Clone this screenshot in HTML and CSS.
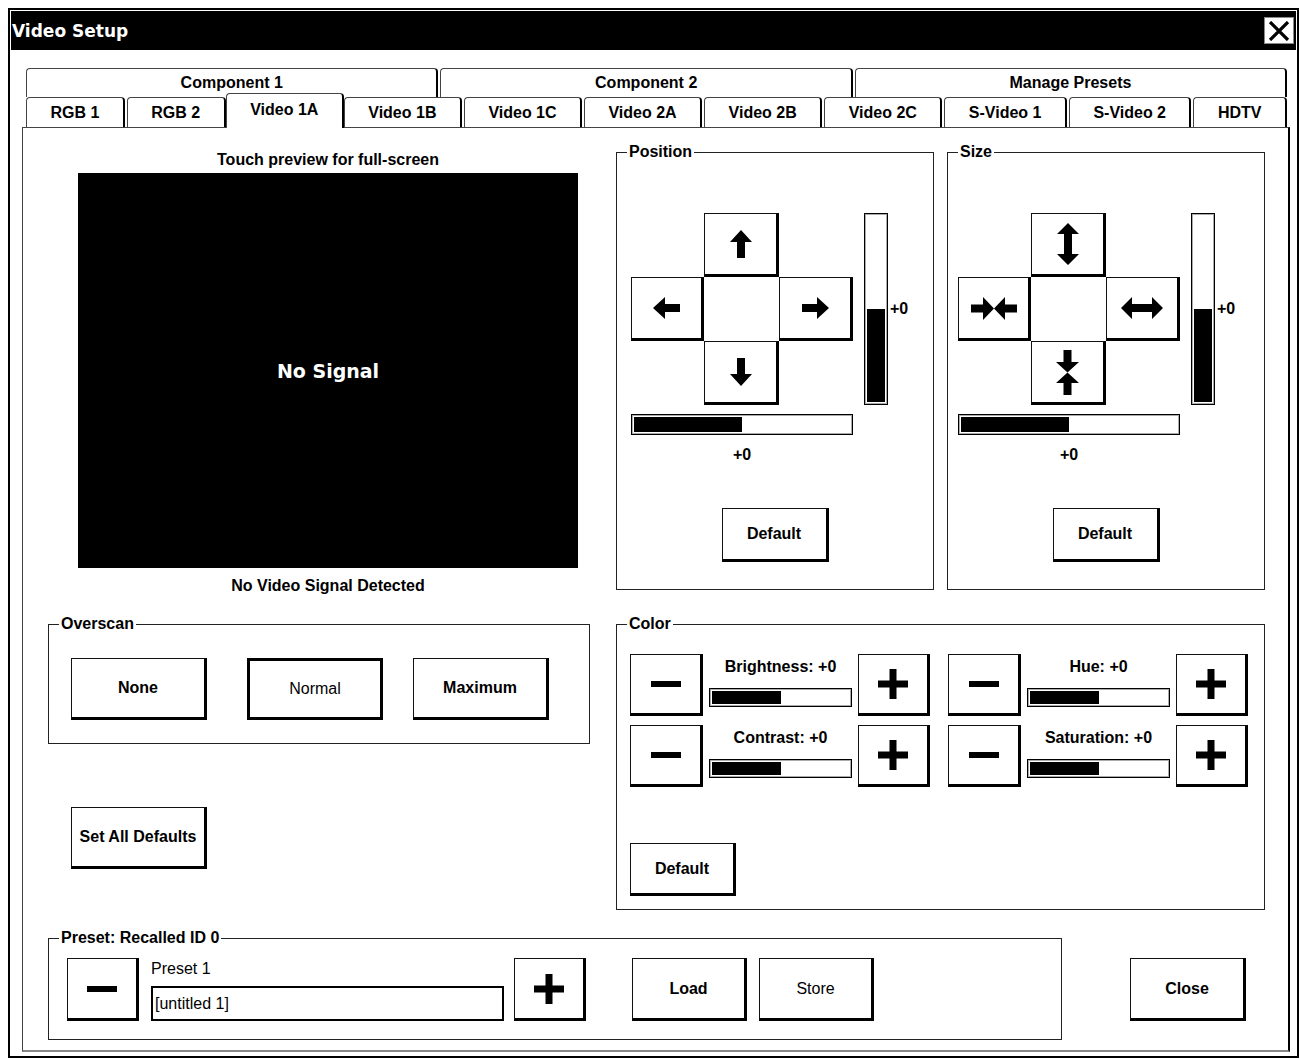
FILE: index.html
```html
<!DOCTYPE html>
<html lang="en">

<head>
    <meta charset="UTF-8">
    <meta
        name="viewport"
        content="width=device-width, initial-scale=1.0"
    >
    <link rel="stylesheet" href="styles.css">
    <title>Video Setup</title>
</head>

<body>
    <div class="window">
        <div class="titlebar">
            <span class="title">Video Setup</span>
            <button class="close-x" type="button">
                <svg width="22" height="20" viewBox="0 0 22 20">
                    <path d="M2 1 L20 19 M20 1 L2 19" stroke="#000" stroke-width="3.2" fill="none" />
                </svg>
            </button>
        </div>

        <div class="content">
            <div class="tabs tabs-top">
                <div class="tab">Component 1</div>
                <div class="tab">Component 2</div>
                <div class="tab">Manage Presets</div>
            </div>
            <div class="tabs tabs-bottom">
                <div class="tab">RGB 1</div>
                <div class="tab">RGB 2</div>
                <div class="tab selected">Video 1A</div>
                <div class="tab">Video 1B</div>
                <div class="tab">Video 1C</div>
                <div class="tab">Video 2A</div>
                <div class="tab">Video 2B</div>
                <div class="tab">Video 2C</div>
                <div class="tab">S-Video 1</div>
                <div class="tab">S-Video 2</div>
                <div class="tab">HDTV</div>
            </div>

            <div class="panel">
                <!-- preview + position / size -->
                <div class="row">
                    <div class="preview-col">
                        <div class="caption">Touch preview for full-screen</div>
                        <div class="preview">No Signal</div>
                        <div class="caption caption-under">No Video Signal Detected</div>
                    </div>

                    <div class="adjust-pair">
                        <fieldset class="group adjust">
                            <legend>Position</legend>
                            <div class="adjust-body">
                                <div class="dpad">
                                    <button class="btn pad-up" type="button">
                                        <svg width="22" height="28" viewBox="0 0 22 28"><polygon points="11,0 22,12 15,12 15,28 7,28 7,12 0,12" /></svg>
                                    </button>
                                    <button class="btn pad-left" type="button">
                                        <svg width="27" height="22" viewBox="0 0 27 22"><polygon points="0,11 12,0 12,7 27,7 27,15 12,15 12,22" /></svg>
                                    </button>
                                    <button class="btn pad-right" type="button">
                                        <svg width="27" height="22" viewBox="0 0 27 22"><polygon points="27,11 15,0 15,7 0,7 0,15 15,15 15,22" /></svg>
                                    </button>
                                    <button class="btn pad-down" type="button">
                                        <svg width="22" height="28" viewBox="0 0 22 28"><polygon points="11,28 22,16 15,16 15,0 7,0 7,16 0,16" /></svg>
                                    </button>
                                </div>
                                <div class="vmeter">
                                    <div class="vbar"><div class="fill" style="height: 50%"></div></div>
                                    <span class="val">+0</span>
                                </div>
                                <div class="hmeter">
                                    <div class="hbar"><div class="fill" style="width: 50%"></div></div>
                                    <div class="val">+0</div>
                                </div>
                            </div>
                            <button class="btn btn-default" type="button">Default</button>
                        </fieldset>

                        <fieldset class="group adjust adjust-size">
                            <legend>Size</legend>
                            <div class="adjust-body">
                                <div class="dpad">
                                    <button class="btn pad-up" type="button">
                                        <svg width="22" height="42" viewBox="0 0 22 42"><polygon points="11,0 22,11 15,11 15,31 22,31 11,42 0,31 7,31 7,11 0,11" /></svg>
                                    </button>
                                    <button class="btn pad-left" type="button">
                                        <svg width="46" height="23" viewBox="0 0 46 23"><polygon points="0,7.5 12,7.5 12,0 23,11.5 12,23 12,15.5 0,15.5" /><polygon points="46,7.5 34,7.5 34,0 23,11.5 34,23 34,15.5 46,15.5" /></svg>
                                    </button>
                                    <button class="btn pad-right" type="button">
                                        <svg width="42" height="22" viewBox="0 0 42 22"><polygon points="0,11 11,0 11,7 31,7 31,0 42,11 31,22 31,15 11,15 11,22" /></svg>
                                    </button>
                                    <button class="btn pad-down" type="button">
                                        <svg width="23" height="45" viewBox="0 0 23 45"><polygon points="7.5,0 15.5,0 15.5,12 23,12 11.5,22.5 0,12 7.5,12" /><polygon points="7.5,45 15.5,45 15.5,33 23,33 11.5,22.5 0,33 7.5,33" /></svg>
                                    </button>
                                </div>
                                <div class="vmeter">
                                    <div class="vbar"><div class="fill" style="height: 50%"></div></div>
                                    <span class="val">+0</span>
                                </div>
                                <div class="hmeter">
                                    <div class="hbar"><div class="fill" style="width: 50%"></div></div>
                                    <div class="val">+0</div>
                                </div>
                            </div>
                            <button class="btn btn-default" type="button">Default</button>
                        </fieldset>
                    </div>
                </div>

                <!-- overscan + color -->
                <div class="row row-mid">
                    <div class="left-col">
                        <fieldset class="group overscan">
                            <legend>Overscan</legend>
                            <div class="overscan-row">
                                <button class="btn btn-wide" type="button">None</button>
                                <button class="btn btn-wide active" type="button">Normal</button>
                                <button class="btn btn-wide" type="button">Maximum</button>
                            </div>
                        </fieldset>
                        <button class="btn btn-wide btn-all" type="button">Set All Defaults</button>
                    </div>

                    <fieldset class="group color">
                        <legend>Color</legend>
                        <div class="color-grid">
                            <div class="color-ctl">
                                <button class="btn btn-pm" type="button"><svg width="30" height="6"><rect width="30" height="6" /></svg></button>
                                <div class="color-mid">
                                    <div class="color-label">Brightness: +0</div>
                                    <div class="hbar"><div class="fill" style="width: 50%"></div></div>
                                </div>
                                <button class="btn btn-pm" type="button"><svg width="30" height="30"><rect x="11.5" width="7" height="30" /><rect y="11.5" width="30" height="7" /></svg></button>
                            </div>
                            <div class="color-ctl">
                                <button class="btn btn-pm" type="button"><svg width="30" height="6"><rect width="30" height="6" /></svg></button>
                                <div class="color-mid">
                                    <div class="color-label">Hue: +0</div>
                                    <div class="hbar"><div class="fill" style="width: 50%"></div></div>
                                </div>
                                <button class="btn btn-pm" type="button"><svg width="30" height="30"><rect x="11.5" width="7" height="30" /><rect y="11.5" width="30" height="7" /></svg></button>
                            </div>
                            <div class="color-ctl">
                                <button class="btn btn-pm" type="button"><svg width="30" height="6"><rect width="30" height="6" /></svg></button>
                                <div class="color-mid">
                                    <div class="color-label">Contrast: +0</div>
                                    <div class="hbar"><div class="fill" style="width: 50%"></div></div>
                                </div>
                                <button class="btn btn-pm" type="button"><svg width="30" height="30"><rect x="11.5" width="7" height="30" /><rect y="11.5" width="30" height="7" /></svg></button>
                            </div>
                            <div class="color-ctl">
                                <button class="btn btn-pm" type="button"><svg width="30" height="6"><rect width="30" height="6" /></svg></button>
                                <div class="color-mid">
                                    <div class="color-label">Saturation: +0</div>
                                    <div class="hbar"><div class="fill" style="width: 50%"></div></div>
                                </div>
                                <button class="btn btn-pm" type="button"><svg width="30" height="30"><rect x="11.5" width="7" height="30" /><rect y="11.5" width="30" height="7" /></svg></button>
                            </div>
                        </div>
                        <button class="btn btn-color-default" type="button">Default</button>
                    </fieldset>
                </div>

                <!-- presets -->
                <div class="row row-bottom">
                    <fieldset class="group preset">
                        <legend>Preset: Recalled ID 0</legend>
                        <div class="preset-row">
                            <button class="btn btn-preset" type="button"><svg width="30" height="6"><rect width="30" height="6" /></svg></button>
                            <div class="preset-name">
                                <label for="presetName">Preset 1</label>
                                <input
                                    type="text"
                                    name="presetName"
                                    id="presetName"
                                    value="[untitled 1]"
                                >
                            </div>
                            <button class="btn btn-preset btn-plus" type="button"><svg width="30" height="30"><rect x="11.5" width="7" height="30" /><rect y="11.5" width="30" height="7" /></svg></button>
                            <button class="btn btn-action btn-load" type="button">Load</button>
                            <button class="btn btn-action btn-store" type="button">Store</button>
                        </div>
                    </fieldset>
                    <button class="btn btn-action btn-close" type="button">Close</button>
                </div>
            </div>
        </div>
    </div>
</body>

</html>
```

FILE: styles.css
```css
body {
    margin: 0;
    background-color: #fff;
    color: #000;
    font-family: "Liberation Sans", Arial, sans-serif;
    font-size: 16px;
    line-height: 18px;
}

.window {
    box-sizing: border-box;
    width: 1291px;
    height: 1050px;
    margin: 8px 0 0 8px;
    border: 2px solid #000;
    display: flex;
    flex-direction: column;
}

.titlebar {
    height: 39px;
    margin: 1px;
    padding: 0 2px 0 1px;
    background-color: #000;
    display: flex;
    align-items: center;
    justify-content: space-between;
}

.title {
    color: #fff;
    font-family: "DejaVu Sans", sans-serif;
    font-weight: bold;
    font-size: 17px;
}

.close-x {
    width: 30px;
    height: 27px;
    padding: 0;
    border: 1px solid #888;
    background-color: #fff;
    display: flex;
    align-items: center;
    justify-content: center;
}

.content {
    flex: 1;
    display: flex;
    flex-direction: column;
    padding: 17px 7px 4px 12px;
}

/* tabs */

.tabs {
    display: flex;
    gap: 2px;
    margin: 0 3px 0 4px;
}

.tabs-top {
    height: 29px;
}

.tabs-bottom {
    height: 30px;
}

.tab {
    flex: 1 1 auto;
    background-color: #fff;
    border: 1px solid #444;
    border-right: 2px solid #000;
    border-bottom: 0;
    border-radius: 4px 4px 0 0;
    display: flex;
    align-items: center;
    justify-content: center;
    font-weight: bold;
    white-space: nowrap;
}

.tab.selected {
    position: relative;
    z-index: 1;
    margin: -4px -2px -1px;
    padding-bottom: 3px;
}

.panel {
    flex: 1;
    border: 1px solid #444;
    border-right: 2px solid #000;
    border-bottom: 2px solid #888;
    padding: 15px 0 0 25px;
}

.row {
    display: flex;
    align-items: flex-start;
    gap: 26px;
}

.row-mid {
    margin-top: 20px;
}

.row-bottom {
    margin-top: 19px;
}

/* preview */

.preview-col {
    width: 512px;
    padding-left: 30px;
}

.caption {
    width: 500px;
    margin-top: 8px;
    text-align: center;
    font-weight: bold;
}

.caption-under {
    margin-top: 9px;
}

.preview {
    width: 500px;
    height: 395px;
    margin-top: 4px;
    background-color: #000;
    color: #fff;
    display: flex;
    align-items: center;
    justify-content: center;
    font-family: "DejaVu Sans", sans-serif;
    font-weight: bold;
    font-size: 19px;
}

/* group boxes */

.group {
    box-sizing: border-box;
    margin: 0;
    padding: 0;
    min-width: 0;
    border: 1px solid #222;
}

.group legend {
    margin-left: 10px;
    padding: 0 2px;
    font-weight: bold;
    line-height: 18px;
}

/* buttons */

.btn {
    box-sizing: border-box;
    padding: 0;
    background-color: #fff;
    color: #000;
    border: 1px solid #111;
    border-right: 3px solid #000;
    border-bottom: 3px solid #000;
    font-family: inherit;
    font-size: 16px;
    font-weight: bold;
    display: flex;
    align-items: center;
    justify-content: center;
}

.btn svg {
    fill: #000;
}

.btn.active {
    border: 3px solid #000;
    font-weight: normal;
}

.btn-wide {
    width: 136px;
    height: 62px;
}

.btn-default {
    width: 107px;
    height: 54px;
    margin: 44px auto 27px;
}

/* position / size */

.adjust-pair {
    width: 649px;
    display: flex;
    justify-content: space-between;
}

.adjust {
    width: 318px;
}

.adjust-body {
    display: grid;
    grid-template-columns: 222px auto;
    column-gap: 11px;
    row-gap: 9px;
    padding: 52px 0 0 14px;
}

.adjust-size .adjust-body {
    padding-left: 10px;
}

.dpad {
    display: grid;
    grid-template-columns: 73px 75px 74px;
    grid-template-rows: 64px 64px 64px;
    grid-template-areas:
        ". up ."
        "left mid right"
        ". down .";
}

.pad-up {
    grid-area: up;
}

.pad-left {
    grid-area: left;
}

.pad-right {
    grid-area: right;
}

.pad-down {
    grid-area: down;
}

.vmeter {
    display: flex;
    align-items: center;
    gap: 2px;
}

.vbar {
    box-sizing: border-box;
    width: 24px;
    height: 192px;
    padding: 2px;
    border: 1px solid #000;
    box-shadow: inset 0 0 0 1px #aaa;
    display: flex;
    flex-direction: column;
    justify-content: flex-end;
}

.vbar .fill {
    background-color: #000;
}

.hbar {
    box-sizing: border-box;
    width: 222px;
    height: 21px;
    padding: 2px;
    border: 1px solid #000;
    box-shadow: inset 0 0 0 1px #aaa;
    display: flex;
}

.hbar .fill {
    background-color: #000;
}

.val {
    font-weight: bold;
}

.hmeter .val {
    margin-top: 11px;
    text-align: center;
}

/* overscan */

.left-col {
    width: 542px;
}

.overscan {
    width: 542px;
}

.overscan-row {
    display: flex;
    padding: 25px 0 23px 22px;
}

.overscan-row .active {
    margin-left: 40px;
}

.overscan-row .active + .btn {
    margin-left: 30px;
}

.btn-all {
    margin: 63px 0 0 23px;
}

/* color */

.color {
    width: 649px;
}

.color-grid {
    display: grid;
    grid-template-columns: 300px 300px;
    column-gap: 18px;
    row-gap: 9px;
    padding: 21px 0 0 13px;
}

.color-ctl {
    display: flex;
    gap: 6px;
}

.btn-pm {
    width: 73px;
    height: 62px;
}

.color-ctl .btn-pm:last-child {
    width: 72px;
}

.color-mid {
    width: 143px;
}

.color-label {
    margin-top: 4px;
    text-align: center;
    font-weight: bold;
}

.color-mid .hbar {
    width: 143px;
    height: 19px;
    margin-top: 12px;
}

.btn-color-default {
    width: 106px;
    height: 53px;
    margin: 56px 0 13px 13px;
}

/* presets */

.preset {
    width: 1014px;
}

.preset-row {
    display: flex;
    padding: 11px 0 18px 18px;
}

.btn-preset {
    width: 72px;
    height: 63px;
}

.preset-name {
    width: 353px;
    height: 63px;
    margin-left: 12px;
    display: flex;
    flex-direction: column;
    justify-content: space-between;
}

.preset-name label {
    margin-top: 2px;
}

.preset-name input {
    box-sizing: border-box;
    width: 353px;
    height: 35px;
    margin: 0;
    padding: 0 2px;
    border: 2px solid #000;
    font-family: inherit;
    font-size: 16px;
    color: #000;
}

.btn-plus {
    margin-left: 10px;
}

.btn-action {
    width: 115px;
    height: 63px;
}

.btn-load {
    margin-left: 46px;
}

.btn-store {
    margin-left: 12px;
    font-weight: normal;
}

.btn-close {
    width: 116px;
    margin: 29px 0 0 42px;
}
```
